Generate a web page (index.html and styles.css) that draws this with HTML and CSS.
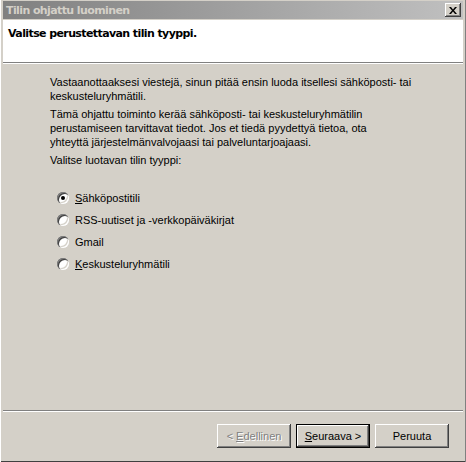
FILE: index.html
```html
<!DOCTYPE html>
<html lang="fi">
<head>
<meta charset="utf-8">
<title>Tilin ohjattu luominen</title>
<link rel="stylesheet" href="styles.css">
</head>
<body>
<div class="window">
  <div class="titlebar">
    <span class="title">Tilin ohjattu luominen</span>
    <span class="close">
      <svg width="8" height="7" viewBox="0 0 8 7"><path d="M0 0h2l2 2.5L6 0h2L5 3.5 8 7H6L4 4.5 2 7H0l3-3.5z" fill="#000"/></svg>
    </span>
  </div>
  <div class="header">
    <h1 class="heading">Valitse perustettavan tilin tyyppi.</h1>
  </div>
  <div class="content">
    <p class="para">Vastaanottaaksesi viestejä, sinun pitää ensin luoda itsellesi sähköposti- tai<br>keskusteluryhmätili.</p>
    <p class="para">Tämä ohjattu toiminto kerää sähköposti- tai keskusteluryhmätilin<br>perustamiseen tarvittavat tiedot. Jos et tiedä pyydettyä tietoa, ota<br>yhteyttä järjestelmänvalvojaasi tai palveluntarjoajaasi.</p>
    <p class="para">Valitse luotavan tilin tyyppi:</p>
    <div class="options">
      <label class="option"><span class="radio checked"></span><span><u>S</u>ähköpostitili</span></label>
      <label class="option"><span class="radio"></span><span>RSS-uutiset ja -verkkopäiväkirjat</span></label>
      <label class="option"><span class="radio"></span><span>Gmail</span></label>
      <label class="option"><span class="radio"></span><span><u>K</u>eskusteluryhmätili</span></label>
    </div>
  </div>
  <div class="footer">
    <button class="btn disabled">&lt; <u>E</u>dellinen</button>
    <button class="btn default"><u>S</u>euraava &gt;</button>
    <button class="btn">Peruuta</button>
  </div>
</div>
</body>
</html>
```
FILE: styles.css
```css
html, body {
  margin: 0;
  padding: 0;
  background: #d4d0c8;
}
body {
  font-family: "Liberation Sans", Arial, sans-serif;
  font-size: 11px;
  color: #000;
}
.window {
  width: 466px;
  height: 462px;
  box-sizing: border-box;
  background: #d4d0c8;
  padding: 1px 3px 3px 3px;
  display: flex;
  flex-direction: column;
  box-shadow: inset 1px 0 #ffffff, inset -1px 0 #808080, inset 0 -1px #404040;
}
.titlebar {
  height: 18px;
  background: linear-gradient(to right, #808080, #c0c0c0);
  display: flex;
  align-items: center;
  justify-content: space-between;
  padding: 0 2px 0 3px;
  flex: none;
}
.title {
  color: #d4d0c8;
  font-weight: bold;
  font-size: 11px;
  font-family: "DejaVu Sans", sans-serif;
  letter-spacing: -0.6px;
}
.close {
  width: 16px;
  height: 14px;
  box-sizing: border-box;
  background: #d4d0c8;
  display: flex;
  align-items: center;
  justify-content: center;
  box-shadow: inset -1px -1px #404040, inset 1px 1px #ffffff, inset -2px -2px #808080;
}
.header {
  height: 43px;
  background: #ffffff;
  margin-top: 1px;
  border-bottom: 1px solid #808080;
  box-shadow: 0 1px #ffffff;
  flex: none;
  box-sizing: border-box;
  padding: 7px 0 0 5px;
}
.heading {
  margin: 0;
  font-family: "DejaVu Sans", sans-serif;
  font-size: 11px;
  font-weight: bold;
  letter-spacing: -0.6px;
}
.content {
  flex: 1;
  padding: 12px 0 0 47px;
  border-bottom: 1px solid #808080;
  box-shadow: 0 1px #ffffff;
}
.para {
  margin: 0 0 4px 0;
  line-height: 14px;
}
.options {
  display: flex;
  flex-direction: column;
  gap: 9px;
  padding: 20px 0 0 7px;
}
.option {
  display: flex;
  align-items: center;
  gap: 6px;
  height: 13px;
}
.radio {
  width: 12px;
  height: 12px;
  border-radius: 50%;
  background: #ffffff;
  box-shadow: inset 1px 1px #808080, inset 2px 2px #404040, inset -1px -1px #ffffff, inset -2px -2px #d4d0c8;
  position: relative;
  flex: none;
}
.radio.checked::after {
  content: "";
  position: absolute;
  left: 4px;
  top: 4px;
  width: 4px;
  height: 4px;
  border-radius: 50%;
  background: #000;
}
.footer {
  height: 48px;
  flex: none;
  display: flex;
  justify-content: flex-end;
  align-items: flex-start;
  gap: 5px;
  padding: 13px 14px 0 0;
  box-sizing: border-box;
}
.btn {
  width: 74px;
  height: 24px;
  margin: 0;
  padding: 0;
  border: none;
  background: #d4d0c8;
  font-family: "Liberation Sans", Arial, sans-serif;
  font-size: 11px;
  color: #000;
  box-shadow: inset -1px -1px #404040, inset 1px 1px #ffffff, inset -2px -2px #808080;
}
.btn.default {
  box-shadow: inset 0 0 0 1px #000, inset -2px -2px #404040, inset 2px 2px #ffffff, inset -3px -3px #808080;
}
.btn.disabled {
  color: #808080;
  text-shadow: 1px 1px #ffffff;
}
```
